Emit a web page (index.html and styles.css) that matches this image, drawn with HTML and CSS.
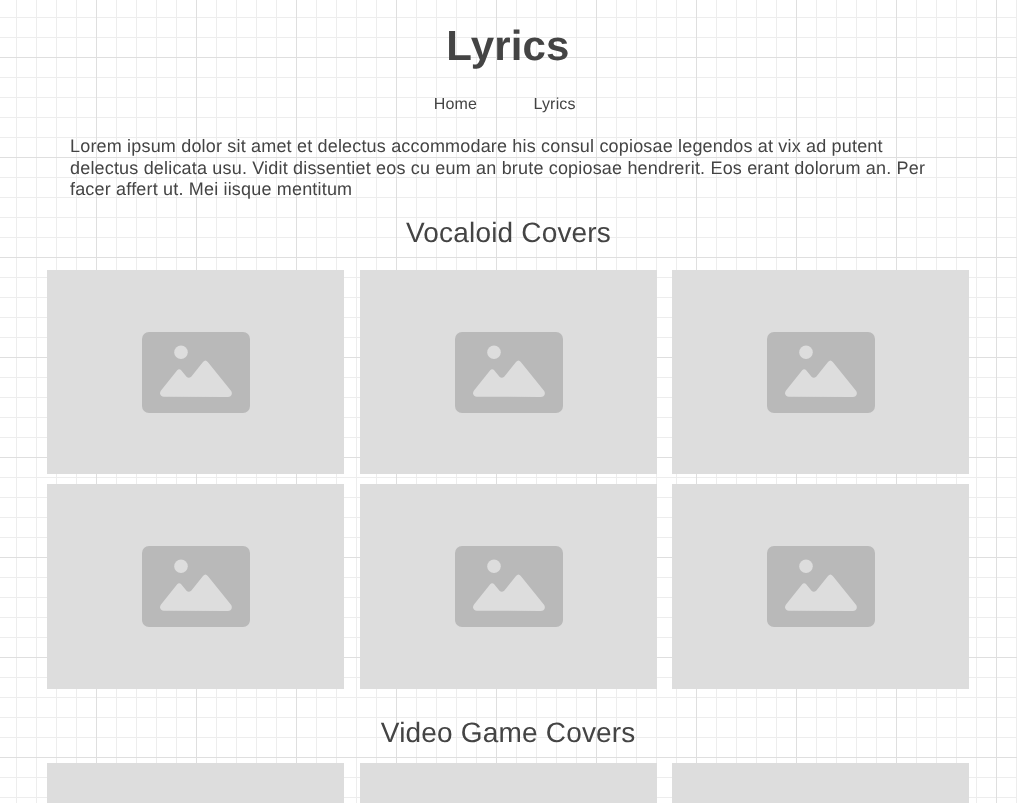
FILE: index.html
```html
<!DOCTYPE html>
<html lang="en">
<head>
<meta charset="utf-8">
<title>Lyrics</title>
<link rel="stylesheet" href="styles.css">
</head>
<body>
<svg class="defs" width="0" height="0" aria-hidden="true">
  <symbol id="picture" viewBox="0 0 108 81">
    <rect width="108" height="81" rx="7" fill="#b9b9b9"/>
    <circle cx="39" cy="20.3" r="6.8" fill="#dddddd"/>
    <path d="M22 64.7Q18.500 64.500 18 61.500Q18 60 19 58.500L35 38.600Q37.200 36 39.400 38.600L44.500 44.700Q46.800 47 49.200 44.700L61 30Q63.400 27 65.800 30L89.200 59Q90.400 61 89.500 63Q88.500 65 86 65Z" fill="#dddddd"/>
  </symbol>
</svg>
<header class="header">
  <h1 class="title">Lyrics</h1>
  <nav class="nav"><a class="link">Home</a><a class="link">Lyrics</a></nav>
</header>
<main class="main">
  <p class="intro">Lorem ipsum dolor sit amet et delectus accommodare his consul copiosae legendos at vix ad putent delectus delicata usu. Vidit dissentiet eos cu eum an brute copiosae hendrerit. Eos erant dolorum an. Per facer affert ut. Mei iisque mentitum</p>
  <h2 class="heading">Vocaloid Covers</h2>
  <div class="gallery">
    <div class="card"><svg class="icon"><use href="#picture"/></svg></div>
    <div class="card"><svg class="icon"><use href="#picture"/></svg></div>
    <div class="card"><svg class="icon"><use href="#picture"/></svg></div>
    <div class="card"><svg class="icon"><use href="#picture"/></svg></div>
    <div class="card"><svg class="icon"><use href="#picture"/></svg></div>
    <div class="card"><svg class="icon"><use href="#picture"/></svg></div>
  </div>
  <h2 class="heading second">Video Game Covers</h2>
  <div class="gallery last">
    <div class="card"></div>
    <div class="card"></div>
    <div class="card"></div>
  </div>
</main>
</body>
</html>
```
FILE: styles.css
```css
body {
  display: flex;
  flex-direction: column;
  height: 803px;
  margin: 0;
  overflow: hidden;
  color: #444;
  font-family: "Liberation Sans", Arial, sans-serif;
  letter-spacing: 0.18px;
  text-rendering: geometricPrecision;
  background-color: #fff;
  background-image:
    linear-gradient(#dfdfdf 1px, transparent 1px),
    linear-gradient(90deg, #dfdfdf 1px, transparent 1px),
    linear-gradient(#ededed 1px, transparent 1px),
    linear-gradient(90deg, #ededed 1px, transparent 1px);
  background-size: 100px 100px, 100px 100px, 20px 20px, 20px 20px;
  background-position: -4px -43px, -4px -43px, -4px -3px, -4px -3px;
}
.header, .main { will-change: transform; }
.defs { display: block; flex: none; }
.header { display: flex; flex: none; flex-direction: column; align-items: center; padding-top: 22px; }
.title { margin: 0 1px 0 0; font-size: 42px; line-height: 48px; }
.nav { display: flex; gap: 56.4px; margin: 26px 7.6px 0 0; font-size: 16px; line-height: 18px; }
.main { display: flex; flex: 1; flex-direction: column; min-height: 0; overflow: hidden; }
.intro { flex: none; margin: 22px 70px 0; font-size: 18px; line-height: 21.6px; }
.heading { flex: none; margin: 15px 0 0; text-align: center; font-size: 28px; font-weight: 400; line-height: 34px; }
.second { margin-top: 27px; padding-right: 0.6px; }
.gallery {
  display: grid;
  flex: none;
  grid-template-columns: 297px 297px 297px;
  grid-auto-rows: 204.5px;
  column-gap: 15.5px;
  row-gap: 10px;
  margin: 20px 0 0 47.3px;
}
.card { display: flex; align-items: center; justify-content: center; background: #ddd; }
.card:nth-child(3n + 2) { padding-left: 1px; }
.icon { width: 108px; height: 81px; }
.last { flex: 1; grid-auto-rows: auto; margin-top: 13px; }
```
